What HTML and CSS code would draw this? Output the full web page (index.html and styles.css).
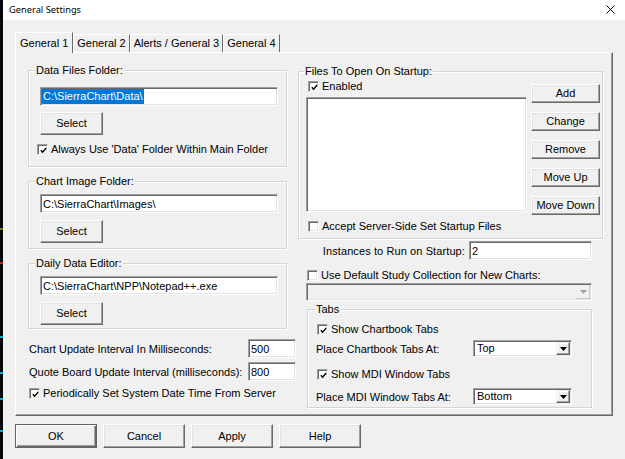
FILE: index.html
```html
<!DOCTYPE html>
<html>
<head>
<meta charset="utf-8">
<title>General Settings</title>
<link rel="stylesheet" href="styles.css">
</head>
<body>
<div class="screen">
  <div class="edge"></div>
  <div class="window">
    <div class="titlebar">
      <span class="title">General Settings</span>
      <svg class="close" width="9" height="9" viewBox="0 0 9 9"><path d="M0.5 0.5 L8.5 8.5 M8.5 0.5 L0.5 8.5" stroke="#000" stroke-width="1" fill="none"/></svg>
    </div>
    <div class="client">
      <div class="tabs">
        <div class="tab active">General 1</div>
        <div class="tab">General 2</div>
        <div class="tab">Alerts / General 3</div>
        <div class="tab">General 4</div>
      </div>
      <div class="panel">
        <div class="col-left">
          <div class="group g1">
            <div class="legend">Data Files Folder:</div>
            <div class="field has-sel"><span class="sel">C:\SierraChart\Data\</span></div>
            <button class="btn select">Select</button>
            <div class="check in-group"><span class="box on"><svg width="7" height="7" viewBox="0 0 7 7"><path d="M0.8 3.2 L2.6 5.2 L6.2 1" stroke="#000" stroke-width="1.4" fill="none"/></svg></span>Always Use 'Data' Folder Within Main Folder</div>
          </div>
          <div class="group g2">
            <div class="legend">Chart Image Folder:</div>
            <div class="field">C:\SierraChart\Images\</div>
            <button class="btn select">Select</button>
          </div>
          <div class="group g3">
            <div class="legend">Daily Data Editor:</div>
            <div class="field">C:\SierraChart\NPP\Notepad++.exe</div>
            <button class="btn select">Select</button>
          </div>
          <div class="setting first">
            <span>Chart Update Interval In Milliseconds:</span>
            <div class="field small">500</div>
          </div>
          <div class="setting second">
            <span>Quote Board Update Interval (milliseconds):</span>
            <div class="field small">800</div>
          </div>
          <div class="check periodic"><span class="box on"><svg width="7" height="7" viewBox="0 0 7 7"><path d="M0.8 3.2 L2.6 5.2 L6.2 1" stroke="#000" stroke-width="1.4" fill="none"/></svg></span>Periodically Set System Date Time From Server</div>
        </div>
        <div class="col-right">
          <div class="group files">
            <div class="legend">Files To Open On Startup:</div>
            <div class="files-body">
              <div class="files-left">
                <div class="check enabled"><span class="box on"><svg width="7" height="7" viewBox="0 0 7 7"><path d="M0.8 3.2 L2.6 5.2 L6.2 1" stroke="#000" stroke-width="1.4" fill="none"/></svg></span>Enabled</div>
                <div class="listbox"></div>
                <div class="check accept"><span class="box"></span>Accept Server-Side Set Startup Files</div>
              </div>
              <div class="files-buttons">
                <button class="btn side">Add</button>
                <button class="btn side">Change</button>
                <button class="btn side">Remove</button>
                <button class="btn side">Move Up</button>
                <button class="btn side">Move Down</button>
              </div>
            </div>
          </div>
          <div class="instances">
            <span>Instances to Run on Startup:</span>
            <div class="field wide">2</div>
          </div>
          <div class="check study"><span class="box"></span>Use Default Study Collection for New Charts:</div>
          <div class="combo disabled study-combo"><span class="val"></span><span class="arrow"><svg width="7" height="4" viewBox="0 0 7 4"><path d="M0 0 H7 L3.5 4 Z" fill="#a0a0a0"/></svg></span></div>
          <div class="group tabsgroup">
            <div class="legend">Tabs</div>
            <div class="check t1"><span class="box on"><svg width="7" height="7" viewBox="0 0 7 7"><path d="M0.8 3.2 L2.6 5.2 L6.2 1" stroke="#000" stroke-width="1.4" fill="none"/></svg></span>Show Chartbook Tabs</div>
            <div class="place p1">
              <span class="place-label">Place Chartbook Tabs At:</span>
              <div class="combo"><span class="val">Top</span><span class="arrow"><svg width="7" height="4" viewBox="0 0 7 4"><path d="M0 0 H7 L3.5 4 Z" fill="#000"/></svg></span></div>
            </div>
            <div class="check t2"><span class="box on"><svg width="7" height="7" viewBox="0 0 7 7"><path d="M0.8 3.2 L2.6 5.2 L6.2 1" stroke="#000" stroke-width="1.4" fill="none"/></svg></span>Show MDI Window Tabs</div>
            <div class="place p2">
              <span class="place-label">Place MDI Window Tabs At:</span>
              <div class="combo"><span class="val">Bottom</span><span class="arrow"><svg width="7" height="4" viewBox="0 0 7 4"><path d="M0 0 H7 L3.5 4 Z" fill="#000"/></svg></span></div>
            </div>
          </div>
        </div>
      </div>
      <div class="actions">
        <button class="btn action default">OK</button>
        <button class="btn action">Cancel</button>
        <button class="btn action">Apply</button>
        <button class="btn action">Help</button>
      </div>
    </div>
  </div>
</div>
</body>
</html>
```

FILE: styles.css
```css
* { box-sizing: border-box; }
html, body { margin: 0; padding: 0; }
body {
  width: 625px;
  height: 459px;
  overflow: hidden;
  background: #f0f0f0;
  color: #000;
  font-family: "Liberation Sans", Arial, sans-serif;
  font-size: 11px;
}
.screen { display: flex; height: 459px; }
.edge {
  width: 3px;
  flex: 0 0 3px;
  background: linear-gradient(to bottom,
    #05060c 0 228px, #7a7a14 228px 230px, #05060c 230px 262px,
    #c02424 262px 264px, #05060c 264px 336px, #14a8c8 336px 338px,
    #05060c 338px 372px, #14a8c8 372px 374px, #05060c 374px 398px,
    #14a8c8 398px 400px, #05060c 400px 430px, #14a8c8 430px 432px,
    #05060c 432px 459px);
}
.window { flex: 1; display: flex; flex-direction: column; background: #f0f0f0; }
.titlebar {
  height: 20px;
  background: #fff;
  display: flex;
  align-items: center;
  padding: 0 10px 2px 6px;
}
.title {
  flex: 1;
  font-family: "Noto Sans", "Open Sans", sans-serif;
  font-size: 9.3px;
  color: #000;
}
.close { display: block; }

.client { padding: 12px 0 0 12px; }

/* tabs */
.tabs { display: flex; align-items: flex-end; height: 20px; }
.tab {
  height: 18px;
  line-height: 17px;
  padding: 0 3px;
  background: #f0f0f0;
  border-top: 1px solid #fff;
  border-left: 1px solid #fff;
  border-right: 1px solid #696969;
  white-space: nowrap;
}
.tab.active {
  position: relative;
  z-index: 1;
  height: 21px;
  line-height: 20px;
  margin-bottom: -1px;
  padding: 0 4px;
}

.panel {
  width: 598px;
  height: 364px;
  border: 1px solid;
  border-color: #fff #696969 #696969 #fff;
  box-shadow: inset -1px -1px 0 #a0a0a0;
  padding: 17px 0 0 12px;
  display: grid;
  grid-template-columns: 268px 305px;
  column-gap: 2px;
  align-items: start;
}

/* group boxes */
.group {
  border: 1px solid #d5d5d5;
  box-shadow: inset 1px 1px 0 #fff, 1px 1px 0 #fff;
  display: flex;
  flex-direction: column;
  align-items: flex-start;
}
.legend {
  margin: -7px 0 0 -2px;
  padding: 0 1px;
  line-height: 13px;
  background: #f0f0f0;
  white-space: nowrap;
}
.col-left { display: flex; flex-direction: column; }
.col-left .group { width: 259px; padding: 0 8px 0 11px; align-items: stretch; }
.col-left .legend { margin-left: -5px; align-self: flex-start; }
.col-left .g1 { padding-bottom: 10px; }
.g1 .field { margin-top: 10px; }
.g1 .select { margin-top: 6px; }
.g1 .check { margin-top: 8px; margin-left: -3px; }
.col-left .g2 { margin-top: 14px; padding-bottom: 5px; }
.col-left .g3 { margin-top: 14px; padding-bottom: 3px; }
.g2 .field, .g3 .field { margin-top: 6px; }
.g2 .select, .g3 .select { margin-top: 7px; }

/* fields */
.field {
  height: 19px;
  background: #fff;
  border: 1px solid;
  border-color: #a0a0a0 #fff #fff #a0a0a0;
  box-shadow: inset 1px 1px 0 #696969, inset -1px -1px 0 #e3e3e3;
  padding-left: 2px;
  display: flex;
  align-items: center;
  white-space: nowrap;
  overflow: hidden;
}
.field.has-sel { padding-left: 1px; }
.sel {
  background: #0078d7;
  color: #fff;
  line-height: 15px;
  height: 15px;
  padding: 0 1px;
}
.field.small { width: 48px; }
.field.wide { width: 123px; }

/* buttons */
.btn {
  font: inherit;
  color: #000;
  background: #f0f0f0;
  border: 1px solid;
  border-color: #fff #696969 #696969 #fff;
  box-shadow: inset -1px -1px 0 #a0a0a0, inset 1px 1px 0 #e3e3e3;
  padding: 0;
  margin: 0;
  line-height: 1;
}
.btn.select { width: 63px; height: 23px; align-self: flex-start; }
.btn.side { width: 69px; height: 19px; }
.btn.action { width: 82px; height: 24px; }
.btn.default {
  border-color: #646464;
  box-shadow: inset 1px 1px 0 #fff, inset -1px -1px 0 #696969, inset -2px -2px 0 #a0a0a0;
}

/* checkboxes */
.check {
  display: flex;
  align-items: center;
  gap: 3px;
  height: 13px;
  line-height: 13px;
  white-space: nowrap;
}
.box {
  width: 11px;
  height: 11px;
  flex: 0 0 11px;
  background: #fff;
  border: 1px solid;
  border-color: #a0a0a0 #fff #fff #a0a0a0;
  box-shadow: inset 1px 1px 0 #696969, inset -1px -1px 0 #e3e3e3;
  display: flex;
  align-items: center;
  justify-content: center;
  padding: 1px 0 0 1px;
}
.box svg { display: block; }

/* left settings */
.setting { display: flex; align-items: center; height: 19px; justify-content: space-between; }
.setting span { padding-left: 1px; white-space: nowrap; }
.setting.first { margin-top: 10px; }
.setting.second { margin-top: 4px; }
.check.periodic { margin-top: 6px; margin-left: 1px; }

/* right column */
.col-right { margin-top: 1px; display: flex; flex-direction: column; align-items: flex-start; }
.group.files { width: 305px; padding: 0 2px 5px 7px; align-items: stretch; }
.files .legend { align-self: flex-start; }
.files-body { display: grid; grid-template-columns: 221px 69px; column-gap: 4px; }
.files-left { display: flex; flex-direction: column; }
.check.enabled { margin-top: 2px; margin-left: 2px; }
.listbox {
  margin-top: 4px;
  height: 115px;
  background: #fff;
  border: 1px solid;
  border-color: #a0a0a0 #fff #fff #a0a0a0;
  box-shadow: inset 1px 1px 0 #696969, inset -1px -1px 0 #e3e3e3;
}
.check.accept { margin-top: 8px; margin-left: 2px; }
.files-buttons { display: flex; flex-direction: column; gap: 9px; margin-top: 6px; }

.instances {
  margin-top: 2px;
  width: 100%;
  padding-right: 11px;
  display: flex;
  justify-content: flex-end;
  align-items: center;
  gap: 4px;
  white-space: nowrap;
}
.instances span { letter-spacing: 0.1px; }
.check.study { margin-top: 9px; margin-left: 9px; }

.combo {
  display: flex;
  height: 17px;
  background: #fff;
  border: 1px solid;
  border-color: #a0a0a0 #fff #fff #a0a0a0;
  box-shadow: inset 1px 1px 0 #696969, inset -1px -1px 0 #e3e3e3;
  padding: 1px;
}
.combo .val { flex: 1; padding-left: 2px; line-height: 13px; white-space: nowrap; }
.combo .arrow {
  width: 14px;
  flex: 0 0 14px;
  background: #f0f0f0;
  border: 1px solid;
  border-color: #f0f0f0 #696969 #696969 #f0f0f0;
  box-shadow: inset -1px -1px 0 #a0a0a0, inset 1px 1px 0 #fff;
  display: flex;
  align-items: center;
  justify-content: center;
}
.combo .arrow svg { display: block; }
.combo.disabled { background: #f0f0f0; }
.study-combo { margin: 1px 0 0 8px; width: 286px; }
.combo.study-combo { height: 18px; }
.combo.disabled .arrow { border-color: #f0f0f0 #c8c8c8 #c8c8c8 #f0f0f0; box-shadow: none; }

.group.tabsgroup { margin: 8px 0 0 9px; width: 285px; padding: 0 0 2px 9px; }
.check.t1 { margin-top: 7px; }
.check.t2 { margin-top: 11px; }
.place { display: flex; align-items: center; height: 17px; margin-left: -1px; }
.place.p1 { margin-top: 4px; }
.place.p2 { margin-top: 7px; }
.place-label { width: 157px; white-space: nowrap; }
.place .combo { width: 99px; height: 17px; }

.actions { display: flex; gap: 6px; margin-top: 8px; }
```
